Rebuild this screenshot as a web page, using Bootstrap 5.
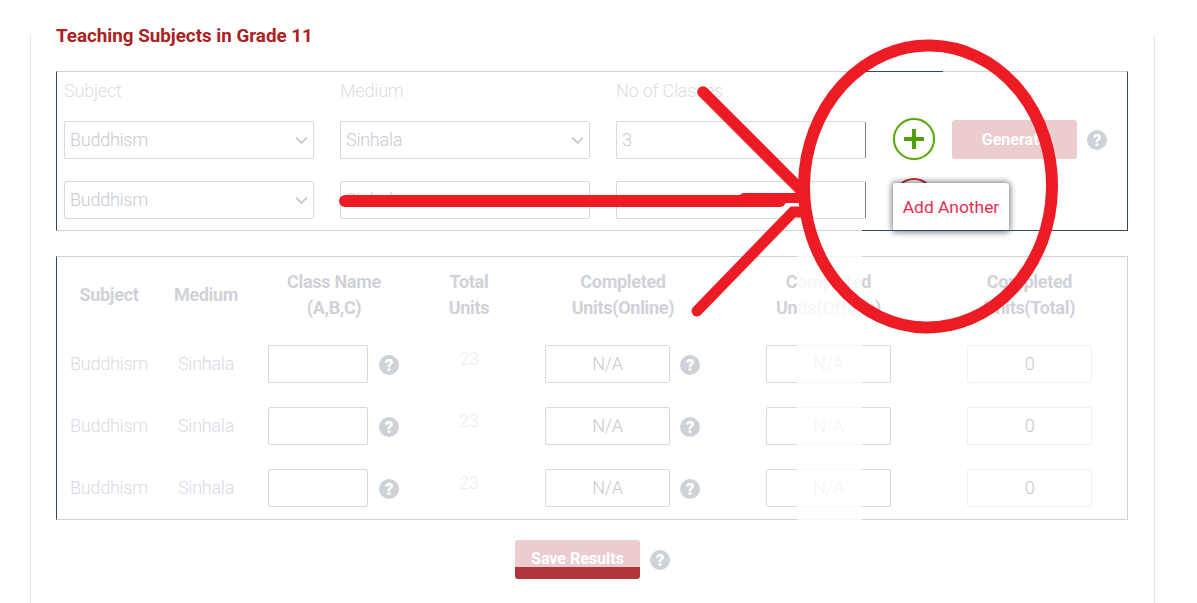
<!DOCTYPE html>
<html lang="en">
<head>
  <meta charset="UTF-8" />
  <meta name="viewport" content="width=device-width, initial-scale=1.0"/>
  <title>Teaching Subjects</title>
  <link href="https://cdn.jsdelivr.net/npm/bootstrap@5.3.0/dist/css/bootstrap.min.css" rel="stylesheet" />
  <style>
    body {
      background-color: #fff;
      font-family: "Roboto", "Liberation Sans", sans-serif;
      overflow: hidden;
      height: 603px;
    }
    .page-panel {
      display: flow-root;
      position: relative;
      margin: 35px 42px 0 30px;
      height: 568px;
      padding: 0 25px;
      border-left: 1px solid #e6e6e6;
      border-right: 1px solid #e6e6e6;
    }
    .panel-title {
      margin: -9px 0 0;
      height: 45px;
      line-height: 20px;
      font-size: 18.8px;
      font-weight: 700;
      color: #ab2022;
    }
    .entry-box, .result-box {
      position: relative;
      width: 1072px;
      border: 1px solid #cfd2d9;
      border-left-color: #34495e;
    }
    .entry-box {
      height: 160px;
      padding: 5px 7px 0;
      border-right-color: #34495e;
    }
    .entry-box::before, .entry-box::after {
      content: "";
      position: absolute;
      height: 1px;
      background: #34495e;
    }
    .entry-box::before { top: -1px; left: 805px; width: 81px; }
    .entry-box::after { bottom: -1px; left: 805px; width: 266px; }
    .entry-labels { height: 27px; margin-bottom: 17px; column-gap: 26px; }
    .entry-labels span {
      width: 250px;
      font-size: 18px;
      font-weight: 300;
      letter-spacing: -.2px;
      line-height: 27px;
      color: #dcdde3;
    }
    .entry-row { height: 38px; margin-bottom: 22px; }
    .field-wide { width: 250px; flex: none; }
    .field-wide + .field-wide { margin-left: 26px; }
    .page-panel .form-select, .page-panel .form-control {
      height: 38px;
      padding: 0 5px 2px;
      border: 1px solid #d9d9dc;
      border-radius: 2px;
      font-size: 18px;
      font-weight: 300;
      letter-spacing: -.25px;
      color: #c7cad2;
      background-color: #fff;
    }
    .page-panel .form-select {
      background-image: url("data:image/svg+xml,%3csvg xmlns='http://www.w3.org/2000/svg' viewBox='0 0 16 16'%3e%3cpath fill='none' stroke='%23c4c4c4' stroke-linecap='round' stroke-width='2' d='m2 5 6 6 6-6'/%3e%3c/svg%3e");
      background-position: right 5px center;
      background-size: 13px 13px;
    }
    .page-panel .field-classes { border-right-color: #77808a; }
    .round-btn {
      width: 42px;
      height: 42px;
      flex: none;
      margin: -2px 1px 0 27px;
      padding: 0;
      background: #fff;
      border: 2.5px solid #5aa80a;
      border-radius: 50%;
      box-shadow: 0 0 1px #a6c95a;
    }
    .round-btn.is-remove { border-color: #c5303a; box-shadow: none; }
    .generate-btn {
      width: 125px;
      height: 39px;
      margin: -1px 10px 0 16px;
      padding: 0;
      border: 0;
      border-radius: 3px;
      background: #ebcdd0;
      color: #fff;
      font-size: 16px;
      font-weight: 700;
    }
    .help-dot {
      width: 20px;
      height: 20px;
      flex: none;
      border-radius: 50%;
      background: #cdd2d9;
      color: #fff;
      font-size: 17px;
      font-weight: 900;
      line-height: 20px;
      text-align: center;
    }
    .entry-row .help-dot { margin-top: -1px; }
    .result-row .help-dot { margin-top: 2px; }
    .add-tip {
      position: absolute;
      left: 836px;
      top: 111px;
      width: 116px;
      height: 48px;
      line-height: 48px;
      text-align: center;
      background: #fff;
      border-radius: 3px;
      box-shadow: 0 0 6px 1px rgba(0, 0, 0, .55);
      font-size: 17.4px;
      font-weight: 400;
      color: #ef2a4f;
    }
    .result-box {
      height: 264px;
      margin-top: 25px;
      padding-top: 12px;
    }
    .result-grid {
      display: grid;
      grid-template-columns: 104px 90px 166px 104px 204px 207px 195px;
      align-items: center;
    }
    .result-head {
      height: 52px;
      margin-bottom: 24px;
      text-align: center;
      font-size: 18px;
      font-weight: 700;
      letter-spacing: -.3px;
      line-height: 26px;
      color: #cfd2d9;
    }
    .result-row {
      height: 38px;
      margin-bottom: 24px;
      text-align: center;
      font-size: 18px;
      font-weight: 300;
      letter-spacing: -.25px;
      color: #d8dbe4;
    }
    .result-row .row-text { margin-top: -2px; }
    .result-row .total-units { color: #ececef; margin-top: -12px; }
    .name-cell { padding-left: 17px; gap: 11px; }
    .online-cell { padding-left: 24px; gap: 10px; }
    .page-panel .cell-input {
      width: 125px;
      text-align: center;
      flex: none;
    }
    .page-panel .cell-input.name-input { width: 100px; }
    .page-panel .cell-input.is-faint { color: #b8bbc2; }
    .page-panel .cell-input.is-total { border-color: #f0f0f2; color: #c4c7cf; }
    .fade-band {
      position: absolute;
      left: 740px;
      top: -2px;
      width: 65px;
      height: 266px;
      background: rgba(255, 255, 255, .82);
    }
    .save-row { margin-top: 20px; column-gap: 10px; }
    .save-btn {
      width: 125px;
      height: 39px;
      padding: 10px 0 0;
      border: 0;
      border-bottom: 12px solid #b0343c;
      border-radius: 3px;
      background: #ebcdd0;
      color: #fff;
      font-size: 16px;
      font-weight: 700;
      line-height: 17px;
    }
    .scribble {
      position: absolute;
      left: 0;
      top: 0;
      pointer-events: none;
    }
  </style>
</head>
<body>
  <div class="page-panel">
    <h5 class="panel-title">Teaching Subjects in Grade 11</h5>

    <div class="entry-box">
      <div class="entry-labels d-flex">
        <span>Subject</span>
        <span>Medium</span>
        <span>No of Classes</span>
      </div>
      <div class="entry-row d-flex align-items-center">
        <select class="form-select field-wide"><option>Buddhism</option></select>
        <select class="form-select field-wide"><option>Sinhala</option></select>
        <input class="form-control field-wide field-classes" value="3" />
        <button class="round-btn d-flex align-items-center justify-content-center" type="button" aria-label="Add">
          <svg width="22" height="22" viewBox="0 0 22 22"><path d="M11 1v20M1 11h20" stroke="#4f9f08" stroke-width="4" fill="none"/></svg>
        </button>
        <button class="generate-btn" type="button">Generate</button>
        <span class="help-dot">?</span>
      </div>
      <div class="entry-row d-flex align-items-center">
        <select class="form-select field-wide"><option>Buddhism</option></select>
        <select class="form-select field-wide"><option>Sinhala</option></select>
        <input class="form-control field-wide field-classes" />
        <button class="round-btn is-remove" type="button" aria-label="Remove"></button>
      </div>
      <div class="add-tip">Add Another</div>
    </div>

    <div class="result-box">
      <div class="result-grid result-head">
        <div>Subject</div>
        <div>Medium</div>
        <div>Class Name<br>(A,B,C)</div>
        <div>Total<br>Units</div>
        <div>Completed<br>Units(Online)</div>
        <div>Completed<br>Units(Offline)</div>
        <div>Completed<br>Units(Total)</div>
      </div>
      <div class="result-grid result-row">
        <div class="row-text">Buddhism</div>
        <div class="row-text">Sinhala</div>
        <div class="d-flex align-items-center name-cell"><input class="form-control cell-input name-input" /><span class="help-dot">?</span></div>
        <div class="total-units">23</div>
        <div class="d-flex align-items-center online-cell"><input class="form-control cell-input" value="N/A" /><span class="help-dot">?</span></div>
        <div class="d-flex justify-content-center"><input class="form-control cell-input is-faint" value="N/A" /></div>
        <div class="d-flex justify-content-center"><input class="form-control cell-input is-total" value="0" /></div>
      </div>
      <div class="result-grid result-row">
        <div class="row-text">Buddhism</div>
        <div class="row-text">Sinhala</div>
        <div class="d-flex align-items-center name-cell"><input class="form-control cell-input name-input" /><span class="help-dot">?</span></div>
        <div class="total-units">23</div>
        <div class="d-flex align-items-center online-cell"><input class="form-control cell-input" value="N/A" /><span class="help-dot">?</span></div>
        <div class="d-flex justify-content-center"><input class="form-control cell-input is-faint" value="N/A" /></div>
        <div class="d-flex justify-content-center"><input class="form-control cell-input is-total" value="0" /></div>
      </div>
      <div class="result-grid result-row">
        <div class="row-text">Buddhism</div>
        <div class="row-text">Sinhala</div>
        <div class="d-flex align-items-center name-cell"><input class="form-control cell-input name-input" /><span class="help-dot">?</span></div>
        <div class="total-units">23</div>
        <div class="d-flex align-items-center online-cell"><input class="form-control cell-input" value="N/A" /><span class="help-dot">?</span></div>
        <div class="d-flex justify-content-center"><input class="form-control cell-input is-faint" value="N/A" /></div>
        <div class="d-flex justify-content-center"><input class="form-control cell-input is-total" value="0" /></div>
      </div>
      <div class="fade-band"></div>
    </div>

    <div class="save-row d-flex justify-content-center align-items-center">
      <button class="save-btn" type="button">Save Results</button>
      <span class="help-dot">?</span>
    </div>
  </div>

  <svg class="scribble" width="1197" height="603" viewBox="0 0 1197 603" fill="none" stroke="#ed1c24" stroke-linecap="round">
    <ellipse cx="928" cy="186.5" rx="124" ry="141" stroke-width="12" transform="rotate(1.2 928 186.5)"/>
    <path d="M703 92 803 192" stroke-width="11.5"/>
    <path d="M345 201H780" stroke-width="12"/>
    <path d="M744 198H804" stroke-width="10"/>
    <path d="M697 311 793 212H806" stroke-width="11"/>
  </svg>

  <script src="https://cdn.jsdelivr.net/npm/bootstrap@5.3.0/dist/js/bootstrap.bundle.min.js"></script>
</body>
</html>
